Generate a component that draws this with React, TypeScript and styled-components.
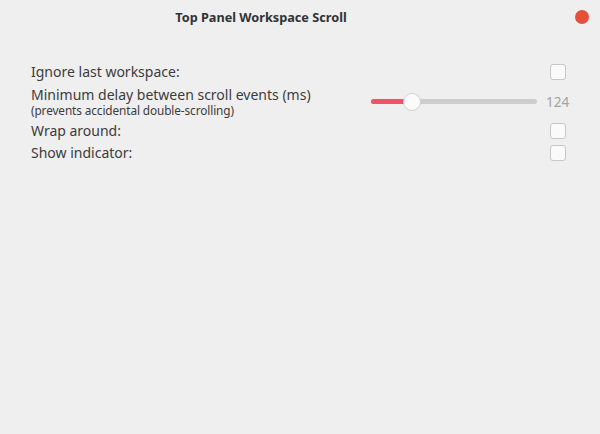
import styled, { createGlobalStyle } from "styled-components";

const GlobalStyle = createGlobalStyle`
	html, body {
		margin: 0;
		padding: 0;
		background: #efefef;
	}
	body {
		font-family: "Noto Sans", "Open Sans", sans-serif;
		color: #3c3c3c;
	}
`;

const Window = styled.div`
	width: 600px;
	height: 434px;
	background: #efefef;
	display: flex;
	flex-direction: column;
	position: relative;
	overflow: hidden;
`;

const Header = styled.div`
	height: 34px;
	display: flex;
	align-items: center;
	justify-content: center;
	padding-right: 78px;
`;

const Title = styled.h1`
	margin: 0;
	font-size: 12.7px;
	font-weight: 700;
	color: #2e3436;
`;

const CloseButton = styled.button`
	position: absolute;
	top: 10px;
	right: 11px;
	width: 14px;
	height: 14px;
	border-radius: 50%;
	border: none;
	padding: 0;
	background: #e6503a;
`;

const Settings = styled.div`
	display: flex;
	flex-direction: column;
	gap: 6px;
	padding: 30px 34px 0 31px;
`;

const Row = styled.div`
	display: flex;
	align-items: center;
	justify-content: space-between;
	min-height: 16px;
`;

const LabelBlock = styled.div`
	display: flex;
	flex-direction: column;
`;

const Label = styled.span<{ $tall?: boolean }>`
	font-size: 14px;
	line-height: ${(p) => (p.$tall ? "17px" : "16px")};
`;

const SubLabel = styled.span`
	font-size: 11.8px;
	line-height: 14px;
	letter-spacing: -0.1px;
`;

const Checkbox = styled.span`
	width: 14px;
	height: 14px;
	border: 1px solid #c7c7c7;
	border-radius: 3px;
	background: #fafafa;
	box-sizing: content-box;
`;

const SliderWrap = styled.div`
	display: flex;
	align-items: center;
	gap: 9px;
	margin-right: -4px;
`;

const Track = styled.div`
	position: relative;
	width: 166px;
	height: 5px;
	border-radius: 3px;
	background: #cdcdcd;
`;

const Fill = styled.div`
	position: absolute;
	left: 0;
	top: 0;
	bottom: 0;
	border-radius: 3px;
	background: #ef5368;
`;

const Knob = styled.div`
	position: absolute;
	top: 50%;
	width: 16px;
	height: 16px;
	margin: -9px 0 0 -9px;
	border-radius: 50%;
	background: #fbfbfb;
	border: 1px solid #d2d2d2;
`;

const Value = styled.span`
	font-size: 13.5px;
	color: #a3a3a3;
	width: 24px;
`;

export default function App() {
	const delay = 124;
	const pct = ((412 - 371) / 166) * 100;
	return (
		<Window>
			<GlobalStyle />
			<Header>
				<Title>Top Panel Workspace Scroll</Title>
			</Header>
			<CloseButton aria-label="Close" />
			<Settings>
				<Row>
					<Label>Ignore last workspace:</Label>
					<Checkbox />
				</Row>
				<Row>
					<LabelBlock>
						<Label $tall>Minimum delay between scroll events (ms)</Label>
						<SubLabel>(prevents accidental double-scrolling)</SubLabel>
					</LabelBlock>
					<SliderWrap>
						<Track>
							<Fill style={{ width: `${pct}%` }} />
							<Knob style={{ left: `${pct}%` }} />
						</Track>
						<Value>{delay}</Value>
					</SliderWrap>
				</Row>
				<Row>
					<Label>Wrap around:</Label>
					<Checkbox />
				</Row>
				<Row>
					<Label>Show indicator:</Label>
					<Checkbox />
				</Row>
			</Settings>
		</Window>
	);
}
